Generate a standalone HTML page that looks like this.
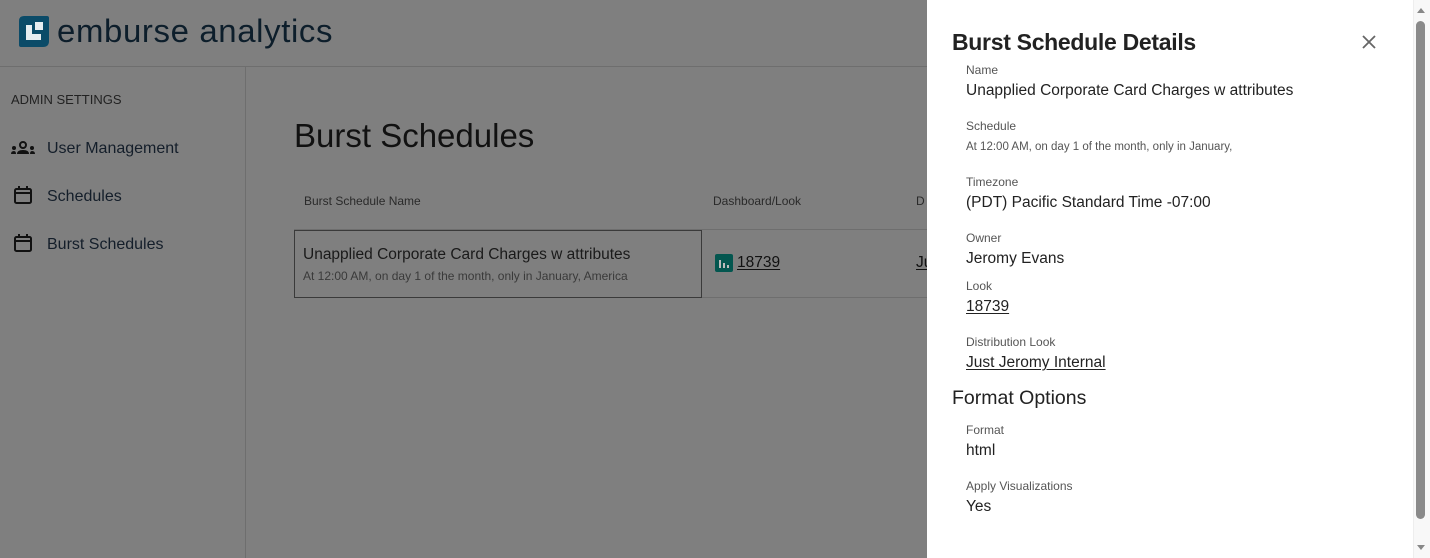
<!DOCTYPE html>
<html><head><meta charset="utf-8"><style>
*{margin:0;padding:0;box-sizing:border-box}
body{width:1430px;height:558px;overflow:hidden;background:#7f7f7f;font-family:"Liberation Sans",sans-serif;color:#141414;position:relative}
.a{position:absolute;white-space:nowrap}
.lbl{font-size:12px;color:#555;line-height:16px}
.val{font-size:15.5px;color:#222;line-height:20px}
u{text-decoration:underline;text-underline-offset:2px}
</style></head><body>
<svg class="a" style="left:19px;top:16px" width="30" height="31" viewBox="0 0 30 31">
<path d="M5 0H28Q30 0 30 2V25Q30 31 24 31H2Q0 31 0 29V5Q0 0 5 0Z" fill="#0b4b68"/>
<rect x="16" y="6" width="8" height="8" fill="#fff" opacity=".9"/>
<path d="M7 9H13V18H22V24H7Z" fill="#fff" opacity=".9"/>
</svg>
<div class="a" style="left:57px;top:11px;font-size:32px;color:#0d1e2b;letter-spacing:0.6px;line-height:40px;transform:scaleX(1.03);transform-origin:left">emburse analytics</div>
<div class="a" style="left:0;top:66px;width:927px;height:1px;background:#6e6e6e"></div>
<div class="a" style="left:245px;top:67px;width:1px;height:491px;background:#6e6e6e"></div>
<div class="a" style="left:11px;top:92px;font-size:13px;color:#222;line-height:16px">ADMIN SETTINGS</div>
<svg class="a" style="left:11px;top:141px" width="24" height="14" viewBox="0 0 24 14"><circle cx="12" cy="4" r="3" fill="none" stroke="#111" stroke-width="2"/><path d="M6 13Q6 9 12 9Q18 9 18 13Z" fill="#111"/><circle cx="3" cy="7" r="2" fill="#111"/><circle cx="21" cy="7" r="2" fill="#111"/><path d="M0 13Q0 10 3 10Q5 10 5 13Z M19 13Q19 10 21 10Q24 10 24 13Z" fill="#111"/></svg>
<div class="a val" style="left:47px;top:139px;font-size:16px;color:#141e2a">User Management</div>
<svg class="a" style="left:14px;top:186px" width="18" height="18" viewBox="0 0 18 18"><rect x="1" y="3" width="16" height="14" rx="1.5" fill="none" stroke="#111" stroke-width="2"/><path d="M1 7H17M5 0V4M13 0V4" stroke="#111" stroke-width="2"/></svg>
<div class="a val" style="left:47px;top:187px;font-size:16px;color:#141e2a">Schedules</div>
<svg class="a" style="left:14px;top:234px" width="18" height="18" viewBox="0 0 18 18"><rect x="1" y="3" width="16" height="14" rx="1.5" fill="none" stroke="#111" stroke-width="2"/><path d="M1 7H17M5 0V4M13 0V4" stroke="#111" stroke-width="2"/></svg>
<div class="a val" style="left:47px;top:235px;font-size:16px;color:#141e2a">Burst Schedules</div>
<div class="a" style="left:294px;top:116px;font-size:33px;color:#111;line-height:40px">Burst Schedules</div>
<div class="a lbl" style="left:304px;top:193px;color:#2a2a2a">Burst Schedule Name</div>
<div class="a lbl" style="left:713px;top:193px;color:#2a2a2a">Dashboard/Look</div>
<div class="a lbl" style="left:916px;top:193px;color:#2a2a2a">D</div>
<div class="a" style="left:294px;top:229px;width:633px;height:1px;background:#6e6e6e"></div>
<div class="a" style="left:294px;top:297px;width:633px;height:1px;background:#6e6e6e"></div>
<div class="a" style="left:294px;top:230px;width:408px;height:68px;border:1px solid #3a3a3a"></div>
<div class="a" style="left:303px;top:245px;font-size:15.5px;color:#1a1a1a;line-height:20px">Unapplied Corporate Card Charges w attributes</div>
<div class="a" style="left:303px;top:268px;font-size:12px;color:#3a3a3a;line-height:16px">At 12:00 AM, on day 1 of the month, only in January, America</div>
<svg class="a" style="left:715px;top:254px" width="18" height="18" viewBox="0 0 18 18"><rect width="18" height="18" rx="2" fill="#03564f"/><path d="M5 6V14M9 9V14M13 11V14" stroke="#bbb" stroke-width="2"/></svg>
<div class="a val" style="left:737px;top:253px;color:#111"><u>18739</u></div>
<div class="a val" style="left:916px;top:253px;color:#111"><u>Ju</u></div>
<div class="a" style="left:927px;top:0;width:503px;height:558px;background:#fff"></div>
<div class="a" style="left:952px;top:28px;font-size:23px;font-weight:600;color:#222;line-height:28px;letter-spacing:-0.3px">Burst Schedule Details</div>
<svg class="a" style="left:1362px;top:35px" width="14" height="14" viewBox="0 0 14 14"><path d="M1 1L13 13M13 1L1 13" stroke="#666" stroke-width="1.8"/></svg>
<div class="a lbl" style="left:966px;top:62px">Name</div>
<div class="a val" style="left:966px;top:81px">Unapplied Corporate Card Charges w attributes</div>
<div class="a lbl" style="left:966px;top:118px">Schedule</div>
<div class="a" style="left:966px;top:140px;font-size:11.5px;color:#555;line-height:15px">At 12:00 AM, on day 1 of the month, only in January,</div>
<div class="a lbl" style="left:966px;top:174px">Timezone</div>
<div class="a val" style="left:966px;top:193px">(PDT) Pacific Standard Time -07:00</div>
<div class="a lbl" style="left:966px;top:230px">Owner</div>
<div class="a val" style="left:966px;top:249px">Jeromy Evans</div>
<div class="a lbl" style="left:966px;top:278px">Look</div>
<div class="a val" style="left:966px;top:297px"><u>18739</u></div>
<div class="a lbl" style="left:966px;top:334px">Distribution Look</div>
<div class="a val" style="left:966px;top:353px"><u>Just Jeromy Internal</u></div>
<div class="a" style="left:952px;top:386px;font-size:19.5px;color:#222;line-height:24px">Format Options</div>
<div class="a lbl" style="left:966px;top:422px">Format</div>
<div class="a val" style="left:966px;top:441px">html</div>
<div class="a lbl" style="left:966px;top:478px">Apply Visualizations</div>
<div class="a val" style="left:966px;top:497px">Yes</div>
<div class="a" style="left:1413px;top:0;width:17px;height:558px;background:#f8f8f8;border-left:1px solid #eee"></div>
<svg class="a" style="left:1416px;top:6px" width="10" height="8" viewBox="0 0 10 8"><path d="M1 7L5 2L9 7Z" fill="#888"/></svg>
<div class="a" style="left:1416px;top:21px;width:9px;height:498px;border-radius:5px;background:#8a8a8a"></div>
<svg class="a" style="left:1416px;top:544px" width="10" height="8" viewBox="0 0 10 8"><path d="M1 1L5 6L9 1Z" fill="#888"/></svg>
</body></html>
